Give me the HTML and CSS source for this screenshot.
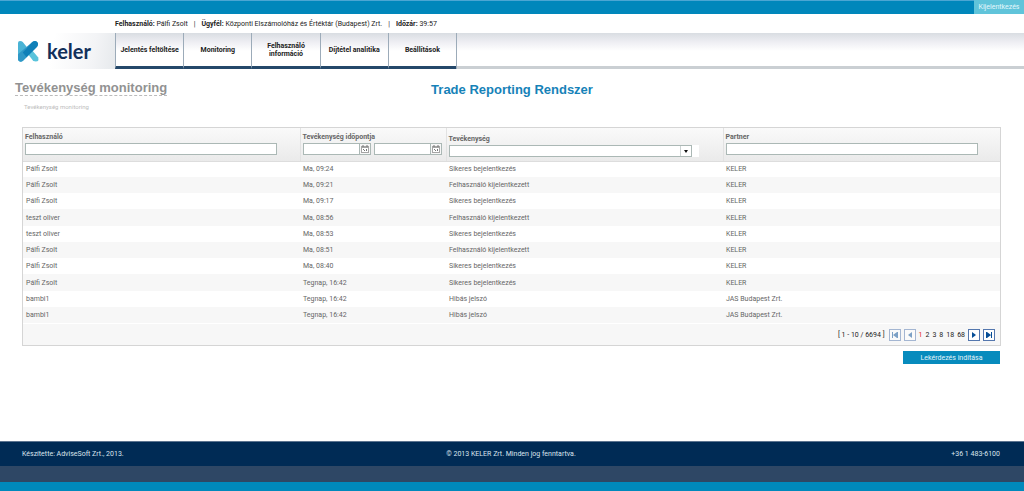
FILE: index.html
```
<!DOCTYPE html>
<html lang="hu">
<head>
<meta charset="utf-8">
<title>Trade Reporting Rendszer</title>
<link rel="stylesheet" href="styles.css">
</head>
<body>
<div class="topbar"><a class="logout" href="#">Kijelentkezés</a></div>
<div class="session">
  <span><b>Felhasználó:</b> Pálfi Zsolt</span><span>|</span>
  <span><b>Ügyfél:</b> Központi Elszámolóház és Értéktár (Budapest) Zrt.</span><span>|</span>
  <span><b>Időzár:</b> 39:57</span>
</div>
<header class="header">
  <a class="logo" href="#">
    <svg class="logo-mark" viewBox="0 0 22 22" aria-hidden="true">
      <path d="M10 13L15 10L21 17Q22 19 21 21Q19 22 16 21Z" fill="#58c3db"/>
      <path d="M0 2Q0 0 2 0Q4 0 5 1L9 6V17L5 21Q2 23 0 20Z" fill="#4ab3d5"/>
      <path d="M0 14L15 1Q18-1 20 1Q22 3 20 6L5 21Q2 23 0 20Z" fill="#2f97c6"/>
      <path d="M8 9L15 1Q18-1 20 1Q22 3 20 6L9 17L5 12Z" fill="#1080b8"/>
    </svg>
    <span class="logo-text">keler</span>
  </a>
  <nav class="nav">
    <a href="#">Jelentés feltöltése</a>
    <a href="#">Monitoring</a>
    <a href="#">Felhasználó<br>információ</a>
    <a href="#">Díjtétel analitika</a>
    <a href="#">Beállítások</a>
  </nav>
</header>
<main class="main">
  <div class="titles">
    <h1 class="page-title">Tevékenység monitoring</h1>
    <h2 class="system-title">Trade Reporting Rendszer</h2>
  </div>
  <div class="breadcrumb">Tevékenység monitoring</div>
  <form class="panel">
    <div class="grid-box">
      <table class="grid">
        <colgroup><col class="col-user"><col class="col-time"><col class="col-activity"><col class="col-partner"></colgroup>
        <thead>
          <tr>
            <th><label for="user">Felhasználó</label><input class="field wide" id="user" type="text"></th>
            <th><label for="from">Tevékenység időpontja</label>
              <div class="dates">
                <span class="date"><input class="field" id="from" type="text"><button type="button" aria-label="Kezdő dátum"><svg viewBox="0 0 8 8"><path d="M0 1H8V8H0Z" fill="#a5a5a5"/><path d="M1 3H7V7H1Z" fill="#fff"/><path d="M2 0V2M6 0V2" stroke="#777"/><path d="M2 4H3V5H2ZM5 4H6V6H5ZM3 5H4V6H3Z" fill="#777"/></svg></button></span>
                <span class="date"><input class="field" aria-label="Záró dátum" type="text"><button type="button" aria-label="Záró dátum választása"><svg viewBox="0 0 8 8"><path d="M0 1H8V8H0Z" fill="#a5a5a5"/><path d="M1 3H7V7H1Z" fill="#fff"/><path d="M2 0V2M6 0V2" stroke="#777"/><path d="M2 4H3V5H2ZM5 4H6V6H5ZM3 5H4V6H3Z" fill="#777"/></svg></button></span>
              </div></th>
            <th class="activity"><label for="activity">Tevékenység</label>
              <div class="combo"><select id="activity"><option></option><option>Sikeres bejelentkezés</option><option>Hibás jelszó</option></select><svg class="arrow" viewBox="0 0 11 10" aria-hidden="true"><path d="M0 0V10" stroke="#9aa5a5"/><path d="M4 4H8L6 7Z" fill="#111"/></svg></div></th>
            <th><label for="partner">Partner</label><input class="field wide" id="partner" type="text"></th>
          </tr>
        </thead>
        <tbody>
          <tr><td>Pálfi Zsolt</td><td>Ma, 09:24</td><td>Sikeres bejelentkezés</td><td>KELER</td></tr>
          <tr><td>Pálfi Zsolt</td><td>Ma, 09:21</td><td>Felhasználó kijelentkezett</td><td>KELER</td></tr>
          <tr><td>Pálfi Zsolt</td><td>Ma, 09:17</td><td>Sikeres bejelentkezés</td><td>KELER</td></tr>
          <tr><td>teszt oliver</td><td>Ma, 08:56</td><td>Felhasználó kijelentkezett</td><td>KELER</td></tr>
          <tr><td>teszt oliver</td><td>Ma, 08:53</td><td>Sikeres bejelentkezés</td><td>KELER</td></tr>
          <tr><td>Pálfi Zsolt</td><td>Ma, 08:51</td><td>Felhasználó kijelentkezett</td><td>KELER</td></tr>
          <tr><td>Pálfi Zsolt</td><td>Ma, 08:40</td><td>Sikeres bejelentkezés</td><td>KELER</td></tr>
          <tr><td>Pálfi Zsolt</td><td>Tegnap, 16:42</td><td>Sikeres bejelentkezés</td><td>KELER</td></tr>
          <tr><td>bambi1</td><td>Tegnap, 16:42</td><td>Hibás jelszó</td><td>JAS Budapest Zrt.</td></tr>
          <tr><td>bambi1</td><td>Tegnap, 16:42</td><td>Hibás jelszó</td><td>JAS Budapest Zrt.</td></tr>
        </tbody>
      </table>
      <div class="pager">
        <span class="range">[ 1 - 10 / 6694 ]</span>
        <button type="button" disabled aria-label="Első oldal"><svg viewBox="0 0 8 8"><path d="M1 1H2V7H1ZM6 1H7V7H6ZM6 1V7L2 4Z"/></svg></button>
        <button type="button" disabled aria-label="Előző oldal"><svg viewBox="0 0 8 8"><path d="M6 1V7L2 4Z"/></svg></button>
        <span class="pages"><a class="current" href="#">1</a><a href="#">2</a><a href="#">3</a><a href="#">8</a><a href="#">18</a><a href="#">68</a></span>
        <button type="button" aria-label="Következő oldal"><svg viewBox="0 0 8 8"><path d="M2 1V7L6 4Z"/></svg></button>
        <button type="button" aria-label="Utolsó oldal"><svg viewBox="0 0 8 8"><path d="M1 1H2V7H1ZM6 1H7V7H6ZM2 1V7L6 4Z"/></svg></button>
      </div>
    </div>
    <button class="submit" type="button">Lekérdezés indítása</button>
  </form>
</main>
<footer class="footer">
  <div class="footer-text"><span>Készítette: AdviseSoft Zrt., 2013.</span><span>© 2013 KELER Zrt. Minden jog fenntartva.</span><span>+36 1 483-6100</span></div>
  <div class="footer-band"></div>
  <div class="footer-line"></div>
</footer>
</body>
</html>
```
FILE: styles.css
```
* { box-sizing: border-box; }
body {
  margin: 0;
  min-height: 100vh;
  display: flex;
  flex-direction: column;
  background: #fff;
  color: #222;
  font: 7px/10px Roboto, "Liberation Sans", Arial, sans-serif;
}
a { color: inherit; text-decoration: none; }
button, input, select { font: inherit; margin: 0; padding: 0; border-radius: 0; }

.topbar {
  display: flex;
  justify-content: flex-end;
  height: 14px;
  background: #0087bb;
  border-top: 1px solid #4ba6d3;
}
.logout {
  width: 50px;
  margin-top: -1px;
  background: #60c4da;
  color: #e4f8fc;
  line-height: 15px;
  text-align: center;
}
.session {
  display: flex;
  gap: 6px;
  height: 19px;
  padding: 0 115px;
  line-height: 21px;
}

.header {
  display: flex;
  height: 36px;
  border-bottom: 3px solid #cacfd3;
  background: linear-gradient(#d9dde2, #eeeef3 9px, #fff 18px);
}
.logo {
  display: flex;
  align-items: center;
  gap: 8px;
  width: 115px;
  height: 36px;
  padding-left: 18px;
  background: linear-gradient(100deg, #fff 45%, #f3f4f6 80%, #e6e9ec);
}
.logo-mark { width: 21px; height: 21px; }
.logo-text {
  color: #12305a;
  font: 700 20px/24px "Lato", "Open Sans", sans-serif;
}
.nav {
  display: grid;
  grid-template-columns: repeat(5, 1fr);
  width: 342px;
  height: 36px;
  border-right: 1px solid #9cabb9;
}
.nav a {
  display: flex;
  align-items: center;
  justify-content: center;
  border-left: 1px solid #9cabb9;
  border-bottom: 3px solid #24486a;
  color: #222;
  font-weight: 700;
  line-height: 8px;
  text-align: center;
}

.main { flex: 1; padding: 11px 23px 24px 15px; }
.titles {
  display: grid;
  grid-template-columns: 1fr auto 1fr;
  justify-items: start;
  margin-right: -8px;
}
.page-title, .system-title {
  margin: 0;
  font: 700 13px/15px "Liberation Sans", Arial, sans-serif;
}
.page-title { height: 16px; color: #929292; border-bottom: 1px dashed #bbb; }
.system-title { color: #1682b8; line-height: 20px; }
.breadcrumb { padding: 2px 9px; color: #bdbdbd; font-size: 6px; }
.panel { margin: 13px 0 0 7px; }
.grid-box { border: 1px solid #d5d5d5; background: #f7f7f7; }
.grid {
  width: 100%;
  table-layout: fixed;
  border-collapse: collapse;
  background: #fff;
  color: #666;
}
.col-user, .col-activity { width: 277px; }
.col-time { width: 146px; }
.grid thead { background: linear-gradient(#fafafa, #eaeaea); }
.grid th {
  height: 33px;
  padding: 4px 3px 0 2px;
  border-bottom: 1px solid #ddd;
  text-align: left;
  vertical-align: top;
}
.grid th + th { border-left: 1px solid #e2e2e2; }
.grid th.activity { padding-top: 6px; }
.grid label { display: block; height: 11px; }
.grid td { height: 16px; padding: 0 3px; }
.grid tr:nth-child(4n) td { height: 17px; }
.grid tbody tr:nth-child(even) { background: #f7f7f7; }
.field {
  display: block;
  height: 12px;
  border: 1px solid #abb8b5;
  background: #fff;
}
.wide { width: 93%; }
.dates { display: flex; gap: 3px; }
.date { display: flex; width: 68px; }
.date .field { flex: 1; min-width: 0; }
.date button {
  width: 11px;
  height: 12px;
  border: 1px solid #abb8b5;
  border-left: 0;
  background: #f7f7f7;
  line-height: 0;
}
.date svg { width: 8px; height: 8px; }
.combo { position: relative; width: 250px; background: #fff; height: 12px; }
.combo select {
  display: block;
  appearance: none;
  width: 243px;
  height: 12px;
  border: 1px solid #abb8b5;
  background: #fff;
}
.arrow {
  position: absolute;
  top: 1px;
  right: 8px;
  width: 11px;
  height: 10px;
  pointer-events: none;
}

.pager {
  display: flex;
  align-items: center;
  justify-content: flex-end;
  gap: 3px;
  height: 22px;
  padding-right: 5px;
  border-top: 1px solid #fff;
}
.range { padding-right: 1px; }
.pages { display: flex; gap: 3px; }
.current { color: #e52330; }
.pager button {
  width: 12px;
  height: 12px;
  border: 1px solid #5477ae;
  background: #fff;
  line-height: 0;
}
.pager button:disabled { opacity: 0.5; }
.pager svg { width: 8px; height: 8px; fill: #064d96; }
.submit {
  display: block;
  width: 97px;
  height: 13px;
  margin: 5px 1px 0 auto;
  border: 0;
  background: #078bbd;
  color: #e2f5fb;
}

.footer-text {
  display: grid;
  grid-template-columns: 1fr auto 1fr;
  height: 25px;
  padding: 0 24px 0 22px;
  border-top: 1px solid #5c7490;
  background: #002b55;
  color: #dbe5ee;
  line-height: 25px;
}
.footer-text span:last-child { text-align: right; }
.footer-band { height: 16px; background: #2e4765; }
.footer-line { height: 9px; background: #0089bc; }
```
